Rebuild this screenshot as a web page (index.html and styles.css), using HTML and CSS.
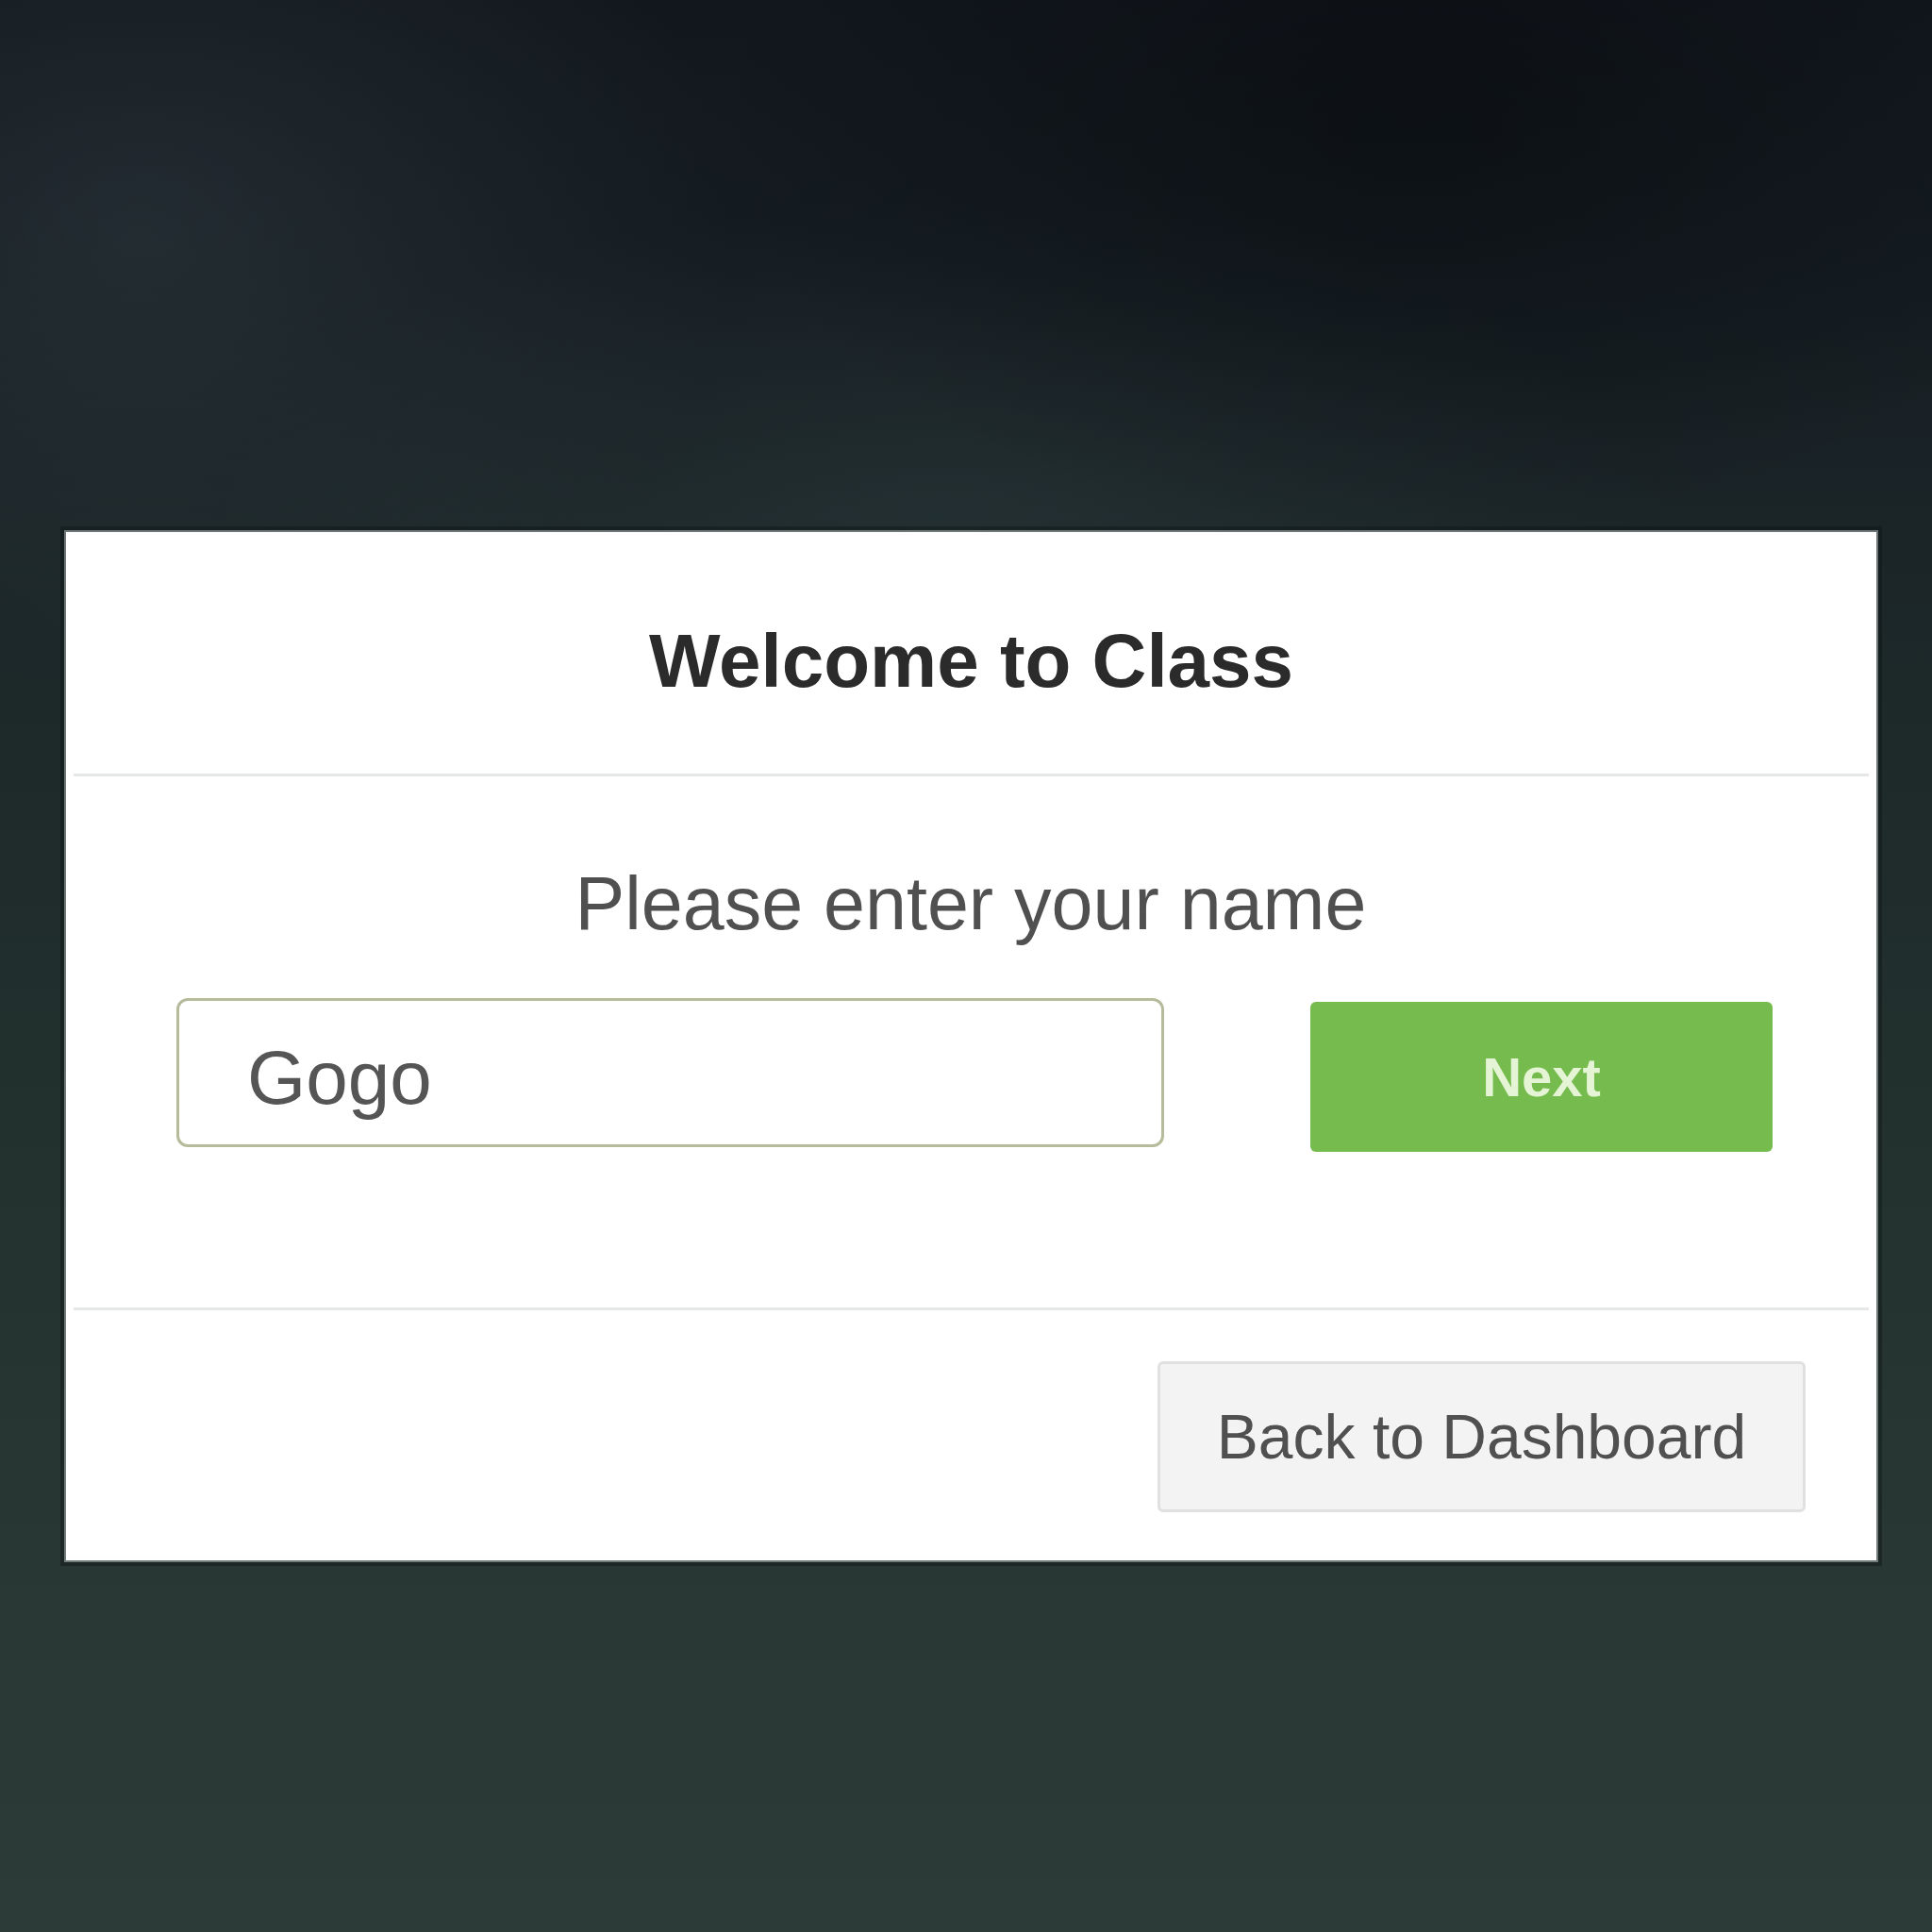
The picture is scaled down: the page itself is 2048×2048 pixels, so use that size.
FILE: index.html
```html
<!DOCTYPE html>
<html>
<head>
<meta charset="utf-8">
<link rel="stylesheet" href="styles.css">
</head>
<body>
<div class="stage">
  <div class="modal">
    <div class="modal-header">
      <h1 class="title">Welcome to Class</h1>
    </div>
    <div class="sep"></div>
    <div class="modal-body">
      <div class="prompt">Please enter your name</div>
      <div class="row">
        <div class="name-input">Gogo</div>
        <div class="btn-next">Next</div>
      </div>
    </div>
    <div class="sep"></div>
    <div class="modal-footer">
      <div class="btn-back">Back to Dashboard</div>
    </div>
  </div>
</div>
</body>
</html>
```
FILE: styles.css
```css
html, body {
  margin: 0;
  padding: 0;
}
body {
  width: 2048px;
  height: 2048px;
  font-family: "Liberation Sans", Arial, sans-serif;
  background:
    radial-gradient(ellipse 900px 700px at 150px 250px, rgba(60, 75, 80, 0.35), rgba(60, 75, 80, 0) 70%),
    radial-gradient(ellipse 1000px 600px at 1500px 120px, rgba(5, 8, 12, 0.5), rgba(5, 8, 12, 0) 75%),
    radial-gradient(ellipse 1100px 500px at 1000px 560px, rgba(60, 80, 80, 0.25), rgba(60, 80, 80, 0) 70%),
    linear-gradient(to bottom, #12171d 0%, #151c21 14%, #1b2528 28%, #1f2c2b 45%, #23322f 62%, #283733 80%, #2c3b37 100%);
  overflow: hidden;
}
.stage {
  padding: 564px 59px 0 70px;
}
.modal {
  width: 1919px;
  height: 1090px;
  background: #ffffff;
  box-sizing: border-box;
  box-shadow: 0 0 0 2px rgba(200, 208, 208, 0.5), 0 0 0 6px rgba(10, 15, 15, 0.35);
  display: flex;
  flex-direction: column;
}
.modal-header {
  height: 256px;
  display: flex;
  align-items: center;
  justify-content: center;
}
.title {
  margin: 0;
  font-size: 80px;
  font-weight: bold;
  color: #2b2b2b;
  line-height: 1;
  padding-top: 18px;
}
.sep {
  height: 3px;
  margin: 0 8px;
  background: #e6e7e7;
}
.modal-body {
  padding: 87px 110px 0 117px;
  height: 563px;
  box-sizing: border-box;
}
.prompt {
  font-size: 79px;
  line-height: 96px;
  color: #505050;
  text-align: center;
  padding-right: 8px;
}
.row {
  margin-top: 52px;
  display: flex;
  align-items: flex-start;
  justify-content: space-between;
}
.name-input {
  width: 1047px;
  height: 158px;
  box-sizing: border-box;
  border: 3px solid #b6bb9c;
  border-radius: 12px;
  padding-left: 72px;
  padding-top: 12px;
  font-size: 80px;
  line-height: 140px;
  color: #555555;
  background: #ffffff;
}
.btn-next {
  margin-top: 4px;
  width: 490px;
  height: 159px;
  box-sizing: border-box;
  background: #75bb4d;
  border-radius: 6px;
  color: #e6f4d6;
  font-weight: bold;
  font-size: 58px;
  line-height: 159px;
  text-align: center;
}
.modal-footer {
  flex: 1;
  display: flex;
  align-items: center;
  justify-content: flex-end;
  padding-right: 75px;
}
.btn-back {
  width: 687px;
  height: 160px;
  box-sizing: border-box;
  border: 3px solid #e0e0e0;
  border-radius: 6px;
  background: #f3f3f3;
  color: #505050;
  font-size: 66px;
  line-height: 154px;
  text-align: center;
  margin-top: 2px;
}
```
